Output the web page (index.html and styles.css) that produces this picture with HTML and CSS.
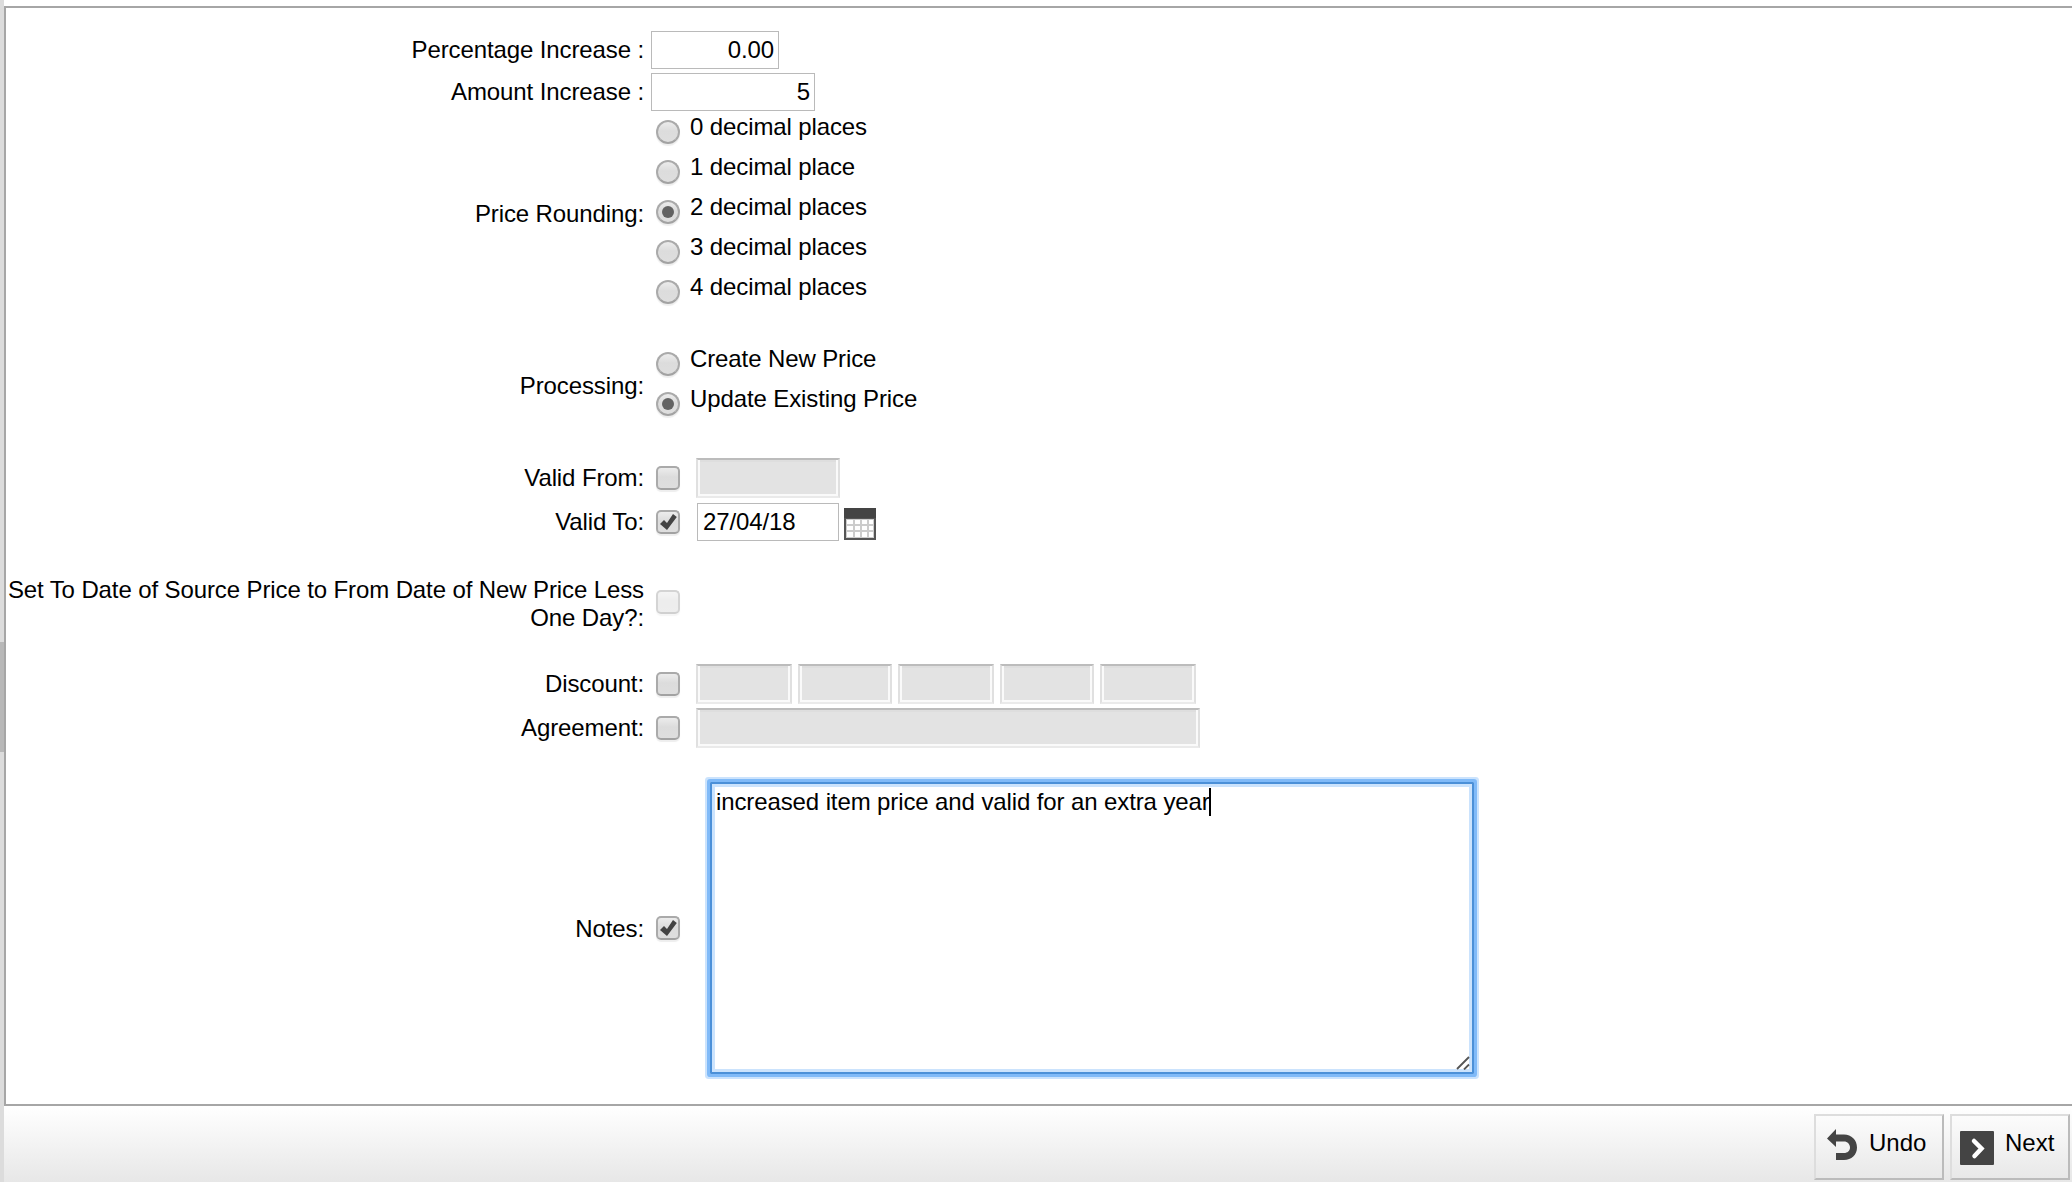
FILE: index.html
```html
<!DOCTYPE html>
<html lang="en">
<head>
<meta charset="utf-8">
<title>Price Maintenance</title>
<link rel="stylesheet" href="styles.css">
</head>
<body>
<div class="gutter"><div class="thumb"></div></div>
<div class="page">
  <main class="panel">
    <div class="row row-text first"><div class="label">Percentage Increase :</div><div class="field percent">0.00</div></div>
    <div class="row row-text"><div class="label">Amount Increase :</div><div class="field amount">5</div></div>
    <div class="row rounding">
      <div class="label">Price Rounding:</div>
      <div class="options">
        <div class="option"><span class="radio"></span><span class="caption">0 decimal places</span></div>
        <div class="option"><span class="radio"></span><span class="caption">1 decimal place</span></div>
        <div class="option"><span class="radio on"></span><span class="caption">2 decimal places</span></div>
        <div class="option"><span class="radio"></span><span class="caption">3 decimal places</span></div>
        <div class="option"><span class="radio"></span><span class="caption">4 decimal places</span></div>
      </div>
    </div>
    <div class="row processing">
      <div class="label">Processing:</div>
      <div class="options">
        <div class="option"><span class="radio"></span><span class="caption">Create New Price</span></div>
        <div class="option"><span class="radio on"></span><span class="caption">Update Existing Price</span></div>
      </div>
    </div>
    <div class="row check-row"><div class="label">Valid From:</div><span class="check"></span><div class="off date"></div></div>
    <div class="row check-row"><div class="label">Valid To:</div><span class="check"><svg class="tick" viewBox="0 0 24 24"><path d="M4 14 8 10l3 3L17 4l3.800 3L11 20z"/></svg></span><div class="field date-on">27/04/18</div>
      <svg class="calendar" viewBox="0 0 32 32"><path fill="#444" d="M0 0h32v11H0z"/><path fill="#555" d="M0 10h32v22H0z"/><path fill="#ccc" d="M2 11h28v19H2z"/><path fill="#fff" d="M3 12h6v4H3zm8 0h5v4h-5zm7 0h5v4h-5zm7 0h4v4h-4zM3 18h6v4H3zm8 0h5v4h-5zm7 0h5v4h-5zm7 0h4v4h-4zM3 24h6v5H3zm8 0h5v5h-5zm7 0h5v5h-5zm7 0h4v5h-4z"/></svg>
    </div>
    <div class="row source"><div class="label">Set To Date of Source Price to From Date of New Price Less<br>One Day?:</div><span class="check faded"></span></div>
    <div class="row check-row"><div class="label">Discount:</div><span class="check"></span>
      <div class="rates"><div class="off wide"></div><div class="off"></div><div class="off wide"></div><div class="off"></div><div class="off wide"></div></div>
    </div>
    <div class="row check-row"><div class="label">Agreement:</div><span class="check"></span><div class="off agreement"></div></div>
    <div class="row notes"><div class="label">Notes:</div><span class="check"><svg class="tick" viewBox="0 0 24 24"><path d="M4 14 8 10l3 3L17 4l3.800 3L11 20z"/></svg></span>
      <div class="textarea"><span class="note">increased item price and valid for an extra year</span><span class="caret"></span>
        <svg class="grip" viewBox="0 0 14 14"><path d="M1 13 13 1M8 13.500l5-5" stroke="#555" stroke-width="1.800" fill="none"/></svg>
      </div>
    </div>
  </main>
  <footer class="footer">
    <div class="button undo"><svg viewBox="0 0 30 32"><path fill="#444" d="M0 9.500 9 0v5.500h8c7.500 0 13 5.500 13 13S24.500 31 17 31H9v-7h8c3.500 0 6-2.200 6-5.500s-2.500-6-6-6H9V18z"/></svg><span>Undo</span></div>
    <div class="button next"><svg viewBox="0 0 34 34"><rect width="34" height="34" rx="1" fill="#444"/><path d="m14 10 7.500 7.500-7 7.500" fill="none" stroke="#fff" stroke-width="4.500" stroke-linecap="round"/></svg><span>Next</span></div>
  </footer>
</div>
</body>
</html>
```
FILE: styles.css
```css
* { box-sizing: border-box; }
body {
  margin: 0;
  width: 2072px;
  height: 1182px;
  display: flex;
  overflow: hidden;
  background: #fff;
  color: #000;
  font: 24px/28px "Liberation Sans", Arial, sans-serif;
  letter-spacing: -0.11px;
}
.gutter { width: 4px; background: #dcdcdc; padding-top: 642px; }
.thumb { height: 110px; background: #b8b8b8; }
.page { flex: 1; padding-top: 6px; display: flex; flex-direction: column; }
.panel { height: 1100px; border: solid #a6a6a6; border-width: 2px 0 2px 2px; }
.row { display: flex; align-items: flex-start; }
.label { width: 638px; flex: none; text-align: right; margin-right: 12px; white-space: nowrap; }
.row-text { height: 42px; }
.row-text .label { padding-top: 5px; margin-right: 7px; }
.first { margin-top: 23px; }
.field { height: 38px; border: 1px solid #bababa; background: #fff; padding: 4px 4px 0 5px; white-space: nowrap; }
.percent { width: 128px; text-align: right; }
.amount { width: 164px; text-align: right; }
.rounding { height: 232px; }
.rounding .label { padding-top: 85px; }
.option { height: 40px; display: flex; gap: 10px; white-space: nowrap; }
.caption { margin-top: -2px; }
.radio, .check {
  width: 24px;
  height: 24px;
  flex: none;
  border: 2px solid #aaa;
  border-bottom-color: #a2a2a2;
  background: linear-gradient(#ececec, #dcdcdc 45%, #dedede);
  box-shadow: 0 2px 1px #eee;
}
.radio { margin-top: 5px; border-radius: 50%; display: flex; align-items: center; justify-content: center; }
.on::after { content: ""; width: 12px; height: 12px; border-radius: 50%; background: #626262; }
.check { border-radius: 5px; margin-top: 8px; }
.processing { height: 111px; }
.processing .label { padding-top: 25px; }
.check-row { height: 44px; }
.check-row .label { padding-top: 6px; }
.off {
  height: 40px;
  border: 2px solid #e0e0e0;
  border-top-color: #bcbcbc;
  border-bottom-color: #eaeaea;
  background: #e3e3e3;
  box-shadow: inset 2px 0 #fafafa, inset -2px 0 #fafafa, inset 0 -2px #fafafa, inset 0 2px #dedede;
}
.date { width: 144px; margin-left: 16px; }
.date-on { width: 142px; margin: 1px 5px 0 17px; }
.calendar { width: 32px; height: 32px; margin-top: 6px; }
.tick { display: block; width: 24px; height: 24px; margin: -2px; fill: #444; }
.source { margin-top: 29px; height: 89px; padding-top: 1px; }
.source .check { margin-top: 14px; }
.faded { opacity: .5; }
.rates { display: flex; gap: 6px; margin-left: 16px; }
.rates .off { width: 94px; }
.rates .wide { width: 96px; }
.agreement { width: 504px; margin-left: 16px; }
.notes { margin-top: 30px; }
.notes .label { padding-top: 133px; }
.notes .check { margin-top: 134px; }
.textarea {
  position: relative;
  width: 764px;
  height: 292px;
  margin-left: 30px;
  padding: 4px;
  border: 2px solid #4b90d8;
  border-radius: 1px;
  box-shadow: 0 0 0 3px #80baf8, 0 0 0 5px #cbe3fd, inset 0 0 0 3px #cbe3fd;
  display: flex;
}
.caret { width: 2px; height: 28px; background: #000; margin-left: -1px; }
.grip { position: absolute; right: 2px; bottom: 2px; width: 14px; height: 14px; }
.footer {
  flex: 1;
  display: flex;
  justify-content: flex-end;
  gap: 6px;
  padding: 8px 2px 2px;
  background: linear-gradient(#fff, #e7e7e7);
}
.button { height: 66px; border: 2px solid #ddd; border-right-color: #bbb; border-bottom-color: #bbb; display: flex; align-items: flex-start; letter-spacing: 0; }
.undo { width: 130px; padding-left: 11px; }
.next { width: 120px; padding-left: 8px; }
.undo svg { width: 30px; height: 32px; margin: 13px 12px 0 0; }
.next svg { width: 34px; height: 34px; margin: 15px 11px 0 0; }
.button span { padding-top: 13px; }
```
